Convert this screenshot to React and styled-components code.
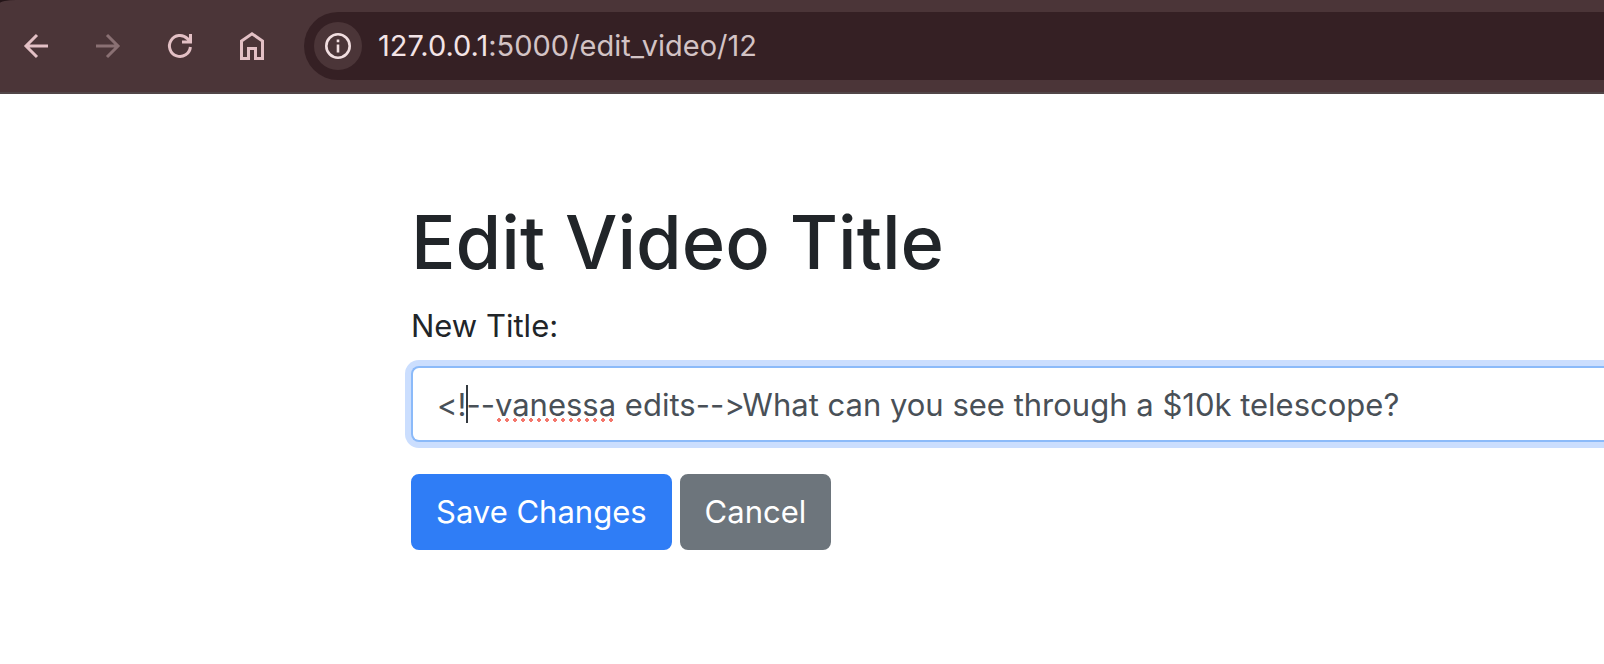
import React, { useLayoutEffect, useRef, useState } from "react";
import styled, { createGlobalStyle, css } from "styled-components";

const GlobalStyle = createGlobalStyle`
  *, *::before, *::after { box-sizing: border-box; }
  body {
    margin: 0;
    background: #fff;
    color: #212529;
    font-family: Inter, "Liberation Sans", sans-serif;
    font-size: 31px;
    line-height: 48px;
    font-variant-ligatures: no-contextual;
  }
`;

const TabStrip = styled.div`
  background: #241518;
`;

const Toolbar = styled.header`
  display: flex;
  align-items: center;
  height: 94px;
  padding-left: 16px;
  border-top-left-radius: 16px 3px;
  background: #4b3538;
  border-bottom: 2px solid #514648;
`;

const Nav = styled.nav`
  display: flex;
  gap: 32px;
  margin-right: 32px;
`;

const IconButton = styled.button`
  display: flex;
  width: 40px;
  height: 40px;
  padding: 0;
  border: 0;
  background: none;
  color: #e3c0c5;

  &:disabled { color: #8a7073; }
`;

const AddressBar = styled.div`
  display: flex;
  flex: 1;
  align-items: center;
  gap: 16px;
  height: 68px;
  padding-left: 10px;
  border-radius: 34px 0 0 34px;
  background: #352024;
`;

const SiteInfo = styled.button`
  display: flex;
  align-items: center;
  justify-content: center;
  width: 48px;
  height: 48px;
  padding: 0;
  border: 0;
  border-radius: 50%;
  background: #4b3538;
  color: #f1dee0;
`;

const Url = styled.span`
  color: #d3c3c5;
  font-size: 29px;
  line-height: 40px;
`;

const Host = styled.span`
  color: #f3e3e5;
`;

const Page = styled.main`
  padding: 100px 0 80px 411px;
`;

const Heading = styled.h1`
  margin: 0 0 12px;
  font-size: 74px;
  font-weight: 500;
  line-height: 96px;
`;

const Label = styled.label`
  display: block;
  margin-bottom: 16px;
`;

const Field = styled.div`
  position: relative;
  margin-bottom: 32px;
`;

const TextInput = styled.input`
  display: block;
  width: 100%;
  height: 76px;
  padding: 12px 24px;
  border: 2px solid #8bbaf9;
  border-right: 0;
  border-radius: 8px 0 0 8px;
  outline: 0;
  box-shadow: 0 0 0 6px #cbdefe;
  background: #fff;
  color: #495057;
  font: inherit;
  font-variant-ligatures: no-contextual;
`;

const Caret = styled.span`
  position: absolute;
  top: 19px;
  width: 2px;
  height: 38px;
  background: #343a40;
  pointer-events: none;
`;

const SpellingMark = styled.span`
  position: absolute;
  top: 52px;
  height: 4px;
  background: radial-gradient(circle at center, #f4776c 2px, transparent 2px) 0 0 / 8px 4px repeat-x;
  pointer-events: none;
`;

const Actions = styled.div`
  display: flex;
  gap: 8px;
`;

const buttonLook = css`
  height: 76px;
  padding: 12px 23px;
  border: 2px solid ${(p) => p.$tone};
  border-radius: 8px;
  background: ${(p) => p.$tone};
  color: #fff;
  font: inherit;
  text-decoration: none;
`;

const Button = styled.button`${buttonLook}`;
const ButtonLink = styled.a`${buttonLook}`;

const Icon = ({ children, size = 40 }) => (
  <svg width={size} height={size} viewBox={`0 0 ${size} ${size}`} fill="none" stroke="currentColor" strokeWidth="3" aria-hidden="true">
    {children}
  </svg>
);

const TEXT_START = 26;

function TitleField() {
  const input = useRef(null);
  const [marks, setMarks] = useState({ caret: 0, from: 0, width: 0 });
  const title = "<!--vanessa edits-->What can you see through a $10k telescope?";

  useLayoutEffect(() => {
    const pen = document.createElement("canvas").getContext("2d");
    const { fontSize, fontFamily } = getComputedStyle(input.current);
    pen.font = `${fontSize} ${fontFamily}`;
    const width = (text) => Math.round(pen.measureText(text).width);
    setMarks({
      caret: TEXT_START + width("<!"),
      from: TEXT_START + width("<!--"),
      width: width("vanessa"),
    });
  }, []);

  return (
    <Field>
      <TextInput id="title" name="title" type="text" ref={input} defaultValue={title} spellCheck={false} />
      <Caret style={{ left: marks.caret }} />
      <SpellingMark style={{ left: marks.from, width: marks.width }} />
    </Field>
  );
}

export default function App() {
  return (
    <>
      <GlobalStyle />
      <TabStrip>
        <Toolbar>
          <Nav aria-label="Browser">
            <IconButton aria-label="Back">
              <Icon><path d="M32 20H10M21 9L10 20L21 31" /></Icon>
            </IconButton>
            <IconButton aria-label="Forward" disabled>
              <Icon><path d="M8 20H30M19 9L30 20L19 31" /></Icon>
            </IconButton>
            <IconButton aria-label="Reload">
              <Icon>
                <path d="M30.4 21A10.5 10.5 0 1 1 27.4 12.6" />
                <path d="M22 16H30.5V8M26.6 11.8L30.5 15.7" />
              </Icon>
            </IconButton>
            <IconButton aria-label="Home">
              <Icon><path d="M9.5 32.5V15L20 7.8L30.5 15V32.5H23.5V22.5H16.5V32.5Z" /></Icon>
            </IconButton>
          </Nav>
          <AddressBar>
            <SiteInfo aria-label="View site information">
              <Icon size={28}>
                <circle cx="14" cy="14" r="11.7" strokeWidth="2.6" />
                <path d="M14 12.5V20.5M14 7.5V10.2" strokeWidth="2.6" />
              </Icon>
            </SiteInfo>
            <Url><Host>127.0.0.1</Host>:5000/edit_video/12</Url>
          </AddressBar>
        </Toolbar>
      </TabStrip>
      <Page>
        <Heading>Edit Video Title</Heading>
        <form onSubmit={(e) => e.preventDefault()}>
          <Label htmlFor="title">New Title:</Label>
          <TitleField />
          <Actions>
            <Button type="submit" $tone="#2f7df6">Save Changes</Button>
            <ButtonLink href="#" $tone="#6d757c">Cancel</ButtonLink>
          </Actions>
        </form>
      </Page>
    </>
  );
}
